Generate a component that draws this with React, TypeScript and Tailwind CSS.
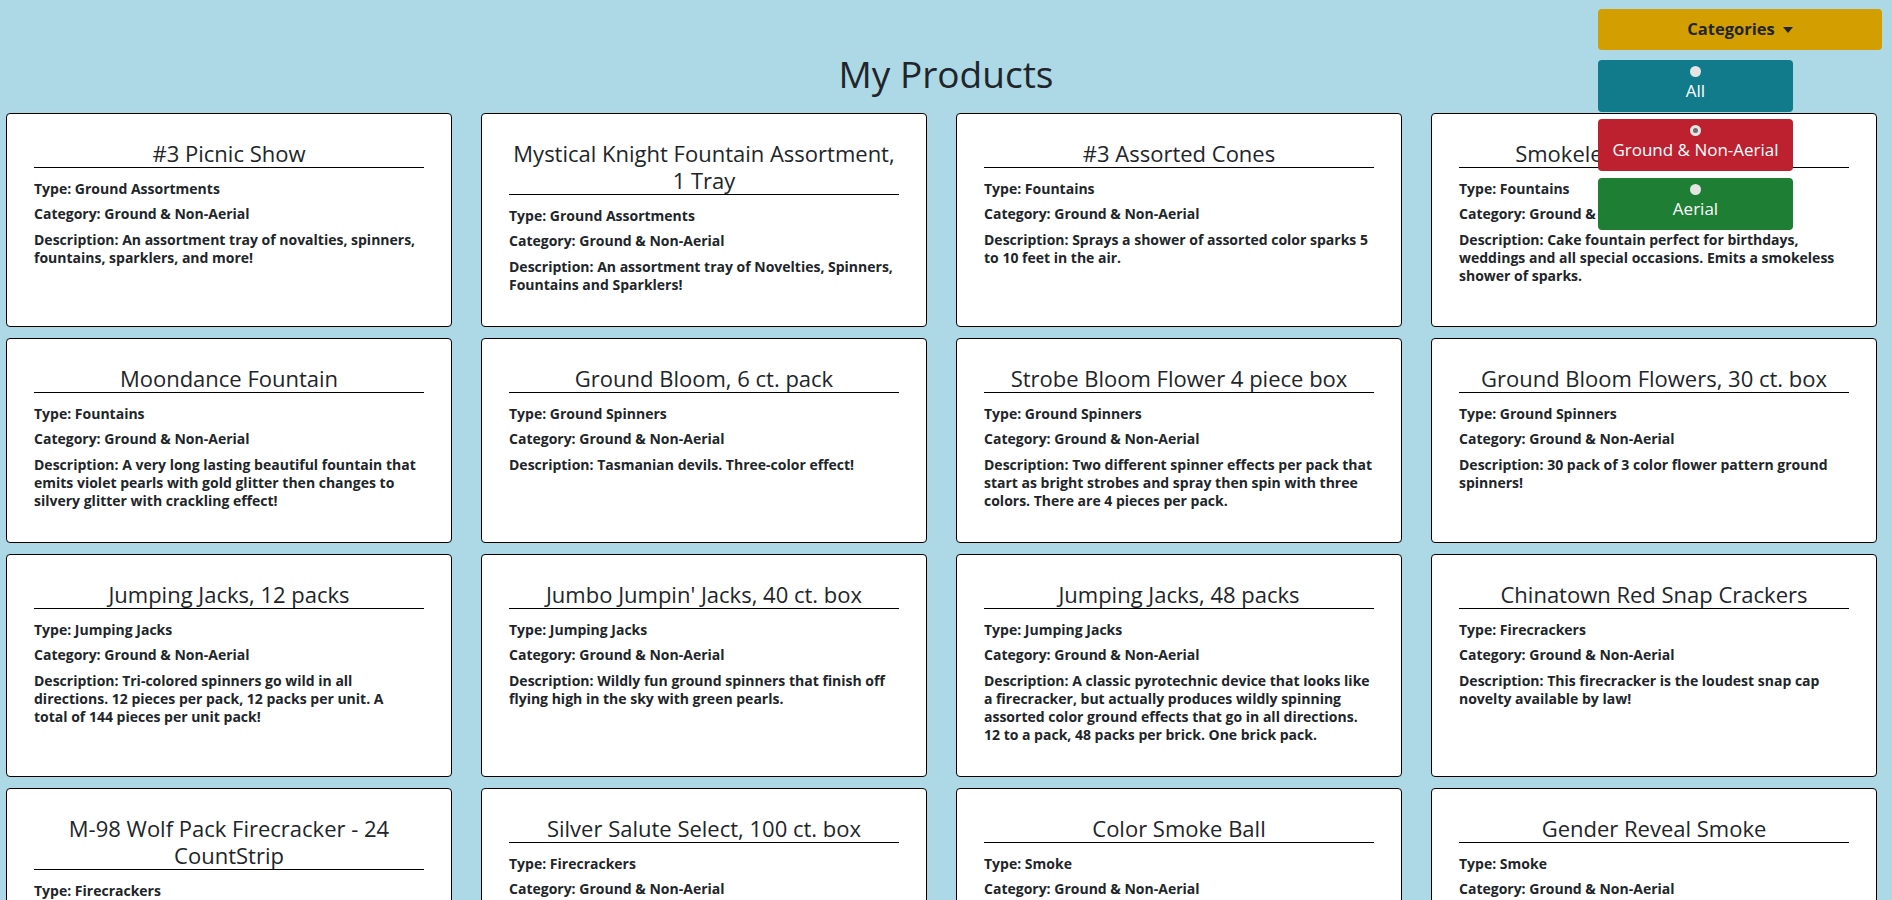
const products = [
	{
		title: "#3 Picnic Show",
		type: "Ground Assortments",
		category: "Ground & Non-Aerial",
		description: "An assortment tray of novalties, spinners, fountains, sparklers, and more!",
	},
	{
		title: "Mystical Knight Fountain Assortment, 1 Tray",
		type: "Ground Assortments",
		category: "Ground & Non-Aerial",
		description: "An assortment tray of Novelties, Spinners, Fountains and Sparklers!",
	},
	{
		title: "#3 Assorted Cones",
		type: "Fountains",
		category: "Ground & Non-Aerial",
		description: "Sprays a shower of assorted color sparks 5 to 10 feet in the air.",
	},
	{
		title: "Smokeless Birthday Candle",
		type: "Fountains",
		category: "Ground & Non-Aerial",
		description:
			"Cake fountain perfect for birthdays, weddings and all special occasions. Emits a smokeless shower of sparks.",
	},
	{
		title: "Moondance Fountain",
		type: "Fountains",
		category: "Ground & Non-Aerial",
		description:
			"A very long lasting beautiful fountain that emits violet pearls with gold glitter then changes to silvery glitter with crackling effect!",
	},
	{
		title: "Ground Bloom, 6 ct. pack",
		type: "Ground Spinners",
		category: "Ground & Non-Aerial",
		description: "Tasmanian devils. Three-color effect!",
	},
	{
		title: "Strobe Bloom Flower 4 piece box",
		type: "Ground Spinners",
		category: "Ground & Non-Aerial",
		description:
			"Two different spinner effects per pack that start as bright strobes and spray then spin with three colors. There are 4 pieces per pack.",
	},
	{
		title: "Ground Bloom Flowers, 30 ct. box",
		type: "Ground Spinners",
		category: "Ground & Non-Aerial",
		description: "30 pack of 3 color flower pattern ground spinners!",
	},
	{
		title: "Jumping Jacks, 12 packs",
		type: "Jumping Jacks",
		category: "Ground & Non-Aerial",
		description:
			"Tri-colored spinners go wild in all directions. 12 pieces per pack, 12 packs per unit. A total\u00a0of 144 pieces per unit pack!",
	},
	{
		title: "Jumbo Jumpin' Jacks, 40 ct. box",
		type: "Jumping Jacks",
		category: "Ground & Non-Aerial",
		description: "Wildly fun ground spinners that finish off flying high in the sky with green pearls.",
	},
	{
		title: "Jumping Jacks, 48 packs",
		type: "Jumping Jacks",
		category: "Ground & Non-Aerial",
		description:
			"A classic pyrotechnic device that looks like a firecracker, but actually produces wildly spinning assorted color ground effects that go in all directions. 12 to a pack, 48 packs per brick. One brick pack.",
	},
	{
		title: "Chinatown Red Snap Crackers",
		type: "Firecrackers",
		category: "Ground & Non-Aerial",
		description: "This firecracker is the loudest snap cap novelty available by law!",
	},
	{
		title: "M-98 Wolf Pack Firecracker - 24 CountStrip",
		type: "Firecrackers",
		category: "Ground & Non-Aerial",
		description: "A strip of 24 loud firecrackers that go off one after another.",
	},
	{
		title: "Silver Salute Select, 100 ct. box",
		type: "Firecrackers",
		category: "Ground & Non-Aerial",
		description: "Big bang salutes with a silver flash, 100 per box.",
	},
	{
		title: "Color Smoke Ball",
		type: "Smoke",
		category: "Ground & Non-Aerial",
		description: "Thick clouds of colored smoke. Great for daytime fun!",
	},
	{
		title: "Gender Reveal Smoke",
		type: "Smoke",
		category: "Ground & Non-Aerial",
		description: "Pink or blue smoke to reveal the big news in style.",
	},
];

const categories = [
	{ label: "All", bg: "bg-[#117a8b]", checked: false },
	{ label: "Ground & Non-Aerial", bg: "bg-[#bd2130]", checked: true },
	{ label: "Aerial", bg: "bg-[#1e7e34]", checked: false },
];

// biome-ignore lint/suspicious/noExplicitAny: <explanation>
const ProductCard = ({ product }: { product: any }) => (
	<div className="rounded-[4px] border border-black bg-white px-[27px] pt-[26px] pb-[16px]">
		<h4 className="border-b border-black text-center text-[22px] leading-[27px]">{product.title}</h4>
		<div className="mt-[12px] text-[14px] font-bold leading-[18px]">
			<p className="mb-[7px]">Type: {product.type}</p>
			<p className="mb-[8px]">Category: {product.category}</p>
			<p className="mb-[16px]">Description: {product.description}</p>
		</div>
	</div>
);

const CategoryMenu = () => (
	<div className="absolute top-[9px] right-[10px] w-[284px]">
		<button
			type="button"
			className="flex h-[41px] w-full items-center justify-center rounded-[4px] bg-[#d39e00] text-[16.5px] font-bold text-[#212529]"
		>
			Categories
			<span className="ml-[8px] inline-block h-0 w-0 border-x-[5px] border-t-[6px] border-x-transparent border-t-[#212529]" />
		</button>
		<div className="mt-[10px] flex w-[195px] flex-col gap-[7px]">
			{categories.map((c) => (
				<div
					key={c.label}
					className={`flex h-[52px] flex-col items-center rounded-[4px] pt-[6px] text-[17px] leading-[24px] text-white ${c.bg}`}
				>
					{c.checked ? (
						<span className="flex h-[11px] w-[11px] items-center justify-center rounded-full bg-[#e4e4e4]">
							<span className="h-[5px] w-[5px] rounded-full bg-[#6f6f6f]" />
						</span>
					) : (
						<span className="h-[11px] w-[11px] rounded-full bg-[#e4e4e4]" />
					)}
					<span className="mt-[2px]">{c.label}</span>
				</div>
			))}
		</div>
	</div>
);

export default function App() {
	return (
		<div className="relative min-h-screen bg-[#add8e6] font-['Open_Sans',sans-serif] text-[#212529]">
			<h1 className="pt-[50px] pb-[15px] text-center text-[37px] leading-[48px]">My Products</h1>
			<div className="grid grid-cols-4 gap-x-[29px] gap-y-[11px] pr-[15px] pl-[6px]">
				{products.map((p) => (
					<ProductCard key={p.title} product={p} />
				))}
			</div>
			<CategoryMenu />
		</div>
	);
}
